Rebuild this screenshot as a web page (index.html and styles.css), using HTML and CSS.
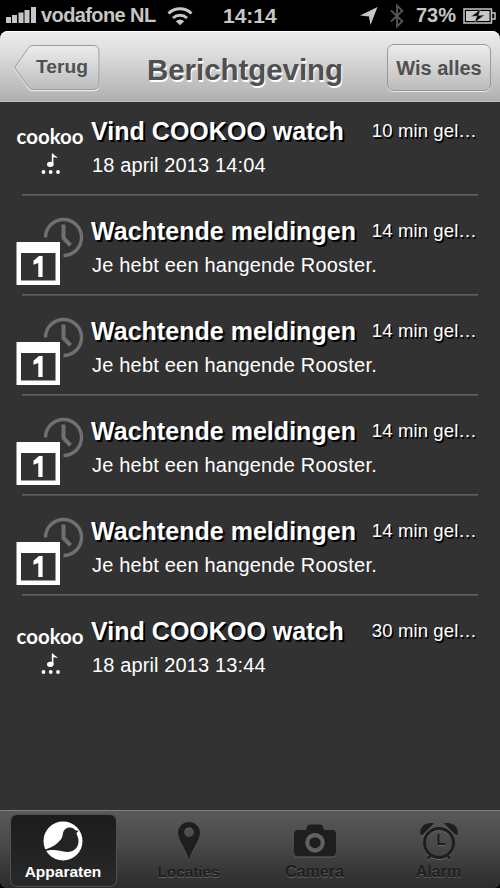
FILE: index.html
```html
<!DOCTYPE html>
<html lang="nl">
<head>
<meta charset="utf-8">
<meta name="viewport" content="width=device-width">
<title>Berichtgeving</title>
<link rel="stylesheet" href="styles.css">
</head>
<body>
<svg class="defs" aria-hidden="true">
  <symbol id="note" viewBox="0 0 76 80">
    <ellipse cx="34.300" cy="54.300" rx="3.300" ry="2.600" fill="#fff"/>
    <path d="M35.800 54V43.500h1.400c.3 2 3.700 2.300 4.400 4.700-1.700-.8-3-1-4.200-1V54z" fill="#fff"/>
    <g fill="#fff"><circle cx="27.500" cy="62" r="1.900"/><circle cx="34.700" cy="62" r="1.900"/><circle cx="42" cy="62" r="1.900"/></g>
  </symbol>
  <symbol id="pending" viewBox="0 0 76 80">
    <path d="M29.500 27.500A18 18 0 1 1 47.500 45.500" fill="none" stroke="#707070" stroke-width="3.400"/>
    <path d="M47.500 14.500V28l7 7.300" fill="none" stroke="#707070" stroke-width="4"/>
    <path d="M.5 32H44v43H.5z" fill="#fff"/>
    <path d="M5 43h34.500v27.500H5z" fill="#323232"/>
    <path d="M22.300 67V53l-4.800 1.700v-3.900l5.500-4.800h3.600v21z" fill="#fff"/>
  </symbol>
</svg>

<div class="status">
  <svg class="signal" width="30" height="16" viewBox="0 0 30 16"><path d="M0 10h5v6H0zM6 8h5v8H6zM12.500 5.500h5V16h-5zM18.500 3h5v13h-5zM25 0h5v16h-5z"/></svg>
  <span class="carrier">vodafone NL</span>
  <svg class="wifi" width="26" height="20" viewBox="0 0 26 20"><g fill="none" stroke="#c6c6c6" stroke-width="3"><path d="M1.500 7.500a16.500 16.500 0 0 1 23 0"/><path d="M6 12a10.500 10.500 0 0 1 14 0"/></g><path d="M8.800 15.200a6.500 6.500 0 0 1 8.400 0L13 19.300z"/></svg>
  <span class="clock">14:14</span>
  <svg class="arrow" width="18" height="18" viewBox="0 0 18 18"><path d="M17.500 0 10.500 18 9 9.500 0 8.500z"/></svg>
  <svg class="bt" width="14" height="24" viewBox="0 0 14 24"><path d="M1 6.500 12.300 17.300 7 22.500v-21l5.300 5.200L1 17.500" fill="none" stroke="#555" stroke-width="1.900"/></svg>
  <span class="percent">73%</span>
  <svg class="battery" width="33" height="16" viewBox="0 0 33 16"><path d="M1 1h27.500v14H1zM29 5h3v6h-3" fill="none" stroke="#c6c6c6" stroke-width="1.500"/><path d="M3 3h23.500v10H3z"/><path d="m17.500 1.500-9.500 7 6-.5-2.500 6.500 10-7.500-6 .5z" fill="#000" stroke="#c6c6c6" stroke-width=".4"/></svg>
</div>

<header class="nav">
  <a class="back"><svg class="back-shape" width="88" height="48" viewBox="0 0 88 48"><defs><linearGradient id="bg" x2="0" y2="1"><stop stop-color="#ededed"/><stop offset="1" stop-color="#bcbcbc"/></linearGradient></defs><path d="M18.500 3H79q6 0 6 6v31.500q0 6-6 6H19.500q-3.500 0-5.500-3L1.500 26q-1-1.500 0-3L14 5.500Q16 3 18.500 3z" fill="none" stroke="#e9e9e9" stroke-width="1.500"/><path d="M18.500 1.500H79q6 0 6 6v32q0 6-6 6H19.500q-3.500 0-5.500-3L1.500 25q-1-1.500 0-3L14 4.500q2-3 4.500-3z" fill="url(#bg)" stroke="#999"/></svg><span class="back-label">Terug</span></a>
  <h1>Berichtgeving</h1>
  <a class="clear"><span>Wis alles</span></a>
</header>

<main class="list">
  <article class="row"><svg class="icon" viewBox="0 0 76 80"><text class="cookoo-word" x="0.5" y="33.700" textLength="67" lengthAdjust="spacingAndGlyphs">cookoo</text><use href="#note"/></svg><div class="body"><div class="line"><h2>Vind COOKOO watch</h2><time>10 min gel…</time></div><p class="date">18 april 2013 14:04</p></div></article>
  <article class="row"><svg class="icon"><use href="#pending"/></svg><div class="body"><div class="line"><h2>Wachtende meldingen</h2><time>14 min gel…</time></div><p>Je hebt een hangende Rooster.</p></div></article>
  <article class="row"><svg class="icon"><use href="#pending"/></svg><div class="body"><div class="line"><h2>Wachtende meldingen</h2><time>14 min gel…</time></div><p>Je hebt een hangende Rooster.</p></div></article>
  <article class="row"><svg class="icon"><use href="#pending"/></svg><div class="body"><div class="line"><h2>Wachtende meldingen</h2><time>14 min gel…</time></div><p>Je hebt een hangende Rooster.</p></div></article>
  <article class="row"><svg class="icon"><use href="#pending"/></svg><div class="body"><div class="line"><h2>Wachtende meldingen</h2><time>14 min gel…</time></div><p>Je hebt een hangende Rooster.</p></div></article>
  <article class="row"><svg class="icon" viewBox="0 0 76 80"><text class="cookoo-word" x="0.5" y="33.700" textLength="67" lengthAdjust="spacingAndGlyphs">cookoo</text><use href="#note"/></svg><div class="body"><div class="line"><h2>Vind COOKOO watch</h2><time>30 min gel…</time></div><p class="date">18 april 2013 13:44</p></div></article>
</main>

<nav class="tabs">
  <a class="tab active"><svg width="40" height="40" viewBox="0 0 40 40"><circle cx="20" cy="20" r="19.500" fill="#fff"/><path d="M1 28.800C5 27.500 11 25.500 15 21.500c4.500-4 4.300-6 5-9.500C20.800 8.500 23.500 6.500 27 6.500c2.500 0 4 1 5 2.500l3.500 1-2 2c0 2 2 4 2 8 0 5.500-3 8.500-6 10-4.500 1.500-8 1-12.500-.2C11.500 28.600 6 29 1.500 30.500z" fill="#242424"/></svg><span>Apparaten</span></a>
  <a class="tab places"><svg width="40" height="40" viewBox="0 0 40 40"><path fill-rule="evenodd" d="M20 39.500C17 28 9 20 9 12a11 11 0 0 1 22 0c0 8-8 16-11 27.500zM20 6.500a4.800 4.800 0 1 0 0 9.600 4.800 4.800 0 0 0 0-9.600z"/></svg><span>Locaties</span></a>
  <a class="tab"><svg width="44" height="40" viewBox="0 0 44 40"><path fill-rule="evenodd" d="M5 9h8c1-4 2-5.500 4-5.500h10c2 0 3 1.500 4 5.500h8q4 0 4 4v18q0 4.500-4 4.500H5q-4 0-4-4.500V13q0-4 4-4zm17 3a9.700 9.700 0 1 0 0 19.400 9.700 9.700 0 0 0 0-19.400z"/><circle cx="22" cy="21.700" r="8" fill="none" stroke="#626262" stroke-width="3"/><circle cx="22" cy="21.700" r="5.500"/></svg><span>Camera</span></a>
  <a class="tab"><svg width="40" height="40" viewBox="0 0 40 40"><path d="M1.500 14C-.5 6 7 .5 15 2.500L3 14.500zM38.500 14C40.500 6 33 .5 25 2.500l12 12z"/><circle cx="20" cy="22" r="14.500" fill="none" stroke="#1e1e1e" stroke-width="3"/><path d="M19.500 13v10H26M12 34l-3 4M28 34l3 4" fill="none" stroke="#1e1e1e" stroke-width="2.200"/></svg><span>Alarm</span></a>
</nav>
</body>
</html>
```
FILE: styles.css
```css
* { box-sizing: border-box; }
html { background: #000; }
body {
  margin: 0;
  width: 500px;
  height: 888px;
  display: flex;
  flex-direction: column;
  overflow: hidden;
  background: #000;
  font-family: "Liberation Sans", Arial, sans-serif;
}
.defs { position: absolute; width: 0; height: 0; }
h1, h2, p { margin: 0; white-space: nowrap; }
svg { flex: none; }

.status {
  flex: none;
  height: 31px;
  display: flex;
  align-items: center;
  padding-left: 6px;
  color: #c6c6c6;
  fill: #c6c6c6;
  font-size: 20px;
  font-weight: bold;
  line-height: 31px;
  white-space: nowrap;
}
.signal { margin-bottom: 1px; }
.carrier { width: 114px; margin-left: 5px; letter-spacing: -0.600px; }
.wifi { margin-left: 12px; }
.clock { width: 54px; margin-left: 30px; font-size: 21px; }
.arrow { margin-left: 83px; }
.bt { margin-left: 12px; }
.percent { width: 42px; margin-left: 12px; }
.battery { margin-left: 5px; }

.nav {
  flex: none;
  height: 71px;
  display: flex;
  border-radius: 8px 8px 0 0;
  border-bottom: 1px solid #bdbdbd;
  background: linear-gradient(#ececec, #dedede 30%, #b0b0b0);
  box-shadow: inset 0 1px #fff;
  color: #505050;
  font-weight: bold;
  padding: 13px 9px 0 14px;
}
.back { display: grid; width: 88px; height: 48px; }
.back-shape, .back-label { grid-area: 1 / 1; }
.back-label { padding-left: 22px; font-size: 19.200px; line-height: 46px; }
.nav h1 {
  width: 196px;
  margin-left: 45px;
  font-size: 29.500px;
  letter-spacing: -0.050px;
  line-height: 51px;
  text-shadow: 1px 1.500px #fff;
}
.clear {
  width: 104px;
  height: 47px;
  margin-left: auto;
  border: 1px solid #999;
  border-radius: 7px;
  background: linear-gradient(#ececec, #bcbcbc);
  box-shadow: 0 1px #e9e9e9;
  font-size: 20px;
  line-height: 46px;
  text-align: center;
  white-space: nowrap;
}

.list {
  flex: 1;
  background: #323232;
  color: #fff;
}
.row {
  height: 100px;
  display: flex;
  padding: 14px 22px 0 16px;
  background: linear-gradient(#666, #484848) 22px 98px / 456px 2px no-repeat;
}
.row:first-child { height: 94px; padding-top: 8px; background-position-y: 92px; }
.row:last-child { background: none; }
.icon { width: 76px; height: 80px; }
.cookoo-word { font: bold 21px Lato, sans-serif; fill: #fff; }
.body { flex: 1; padding-top: 5px; }
.line { display: flex; justify-content: space-between; }
.line h2 {
  margin-left: -1px;
  font-size: 25px;
  letter-spacing: 0.030px;
  line-height: 32px;
  text-shadow: 2px 2px #000;
}
time {
  margin-right: 1px;
  font-size: 18.500px;
  letter-spacing: 0.120px;
  line-height: 31px;
  text-shadow: 1.500px 1.500px #000;
  white-space: nowrap;
}
.row p { font-size: 20px; line-height: 36px; letter-spacing: 0.200px; }
.row .date { letter-spacing: 0.130px; }

.tabs {
  flex: none;
  height: 78px;
  display: grid;
  grid-template-columns: 125px 126px 124px 125px;
  border-top: 1px solid #808080;
  border-radius: 0 0 6px 6px;
  background: linear-gradient(#595959, #484848 45%, #2c2c2c);
}
.tab {
  display: flex;
  flex-direction: column;
  align-items: center;
  width: 105px;
  height: 71px;
  margin: 4px 0 0 11px;
  padding-top: 6px;
  border-radius: 6px;
  font-size: 16px;
  font-weight: bold;
  line-height: 21px;
  color: #1e1e1e;
  fill: #1e1e1e;
  text-shadow: 0 1px #606060;
}
.tab svg { filter: drop-shadow(0 1px #666); }
.places { font-size: 15.500px; letter-spacing: -0.100px; }
.active {
  margin-left: 10.500px;
  font-size: 15.500px;
  background: linear-gradient(#1c1c1c, #292929);
  box-shadow: 0 0 0 1px #505050;
  color: #fff;
  text-shadow: none;
}
.active svg { filter: none; }
```
